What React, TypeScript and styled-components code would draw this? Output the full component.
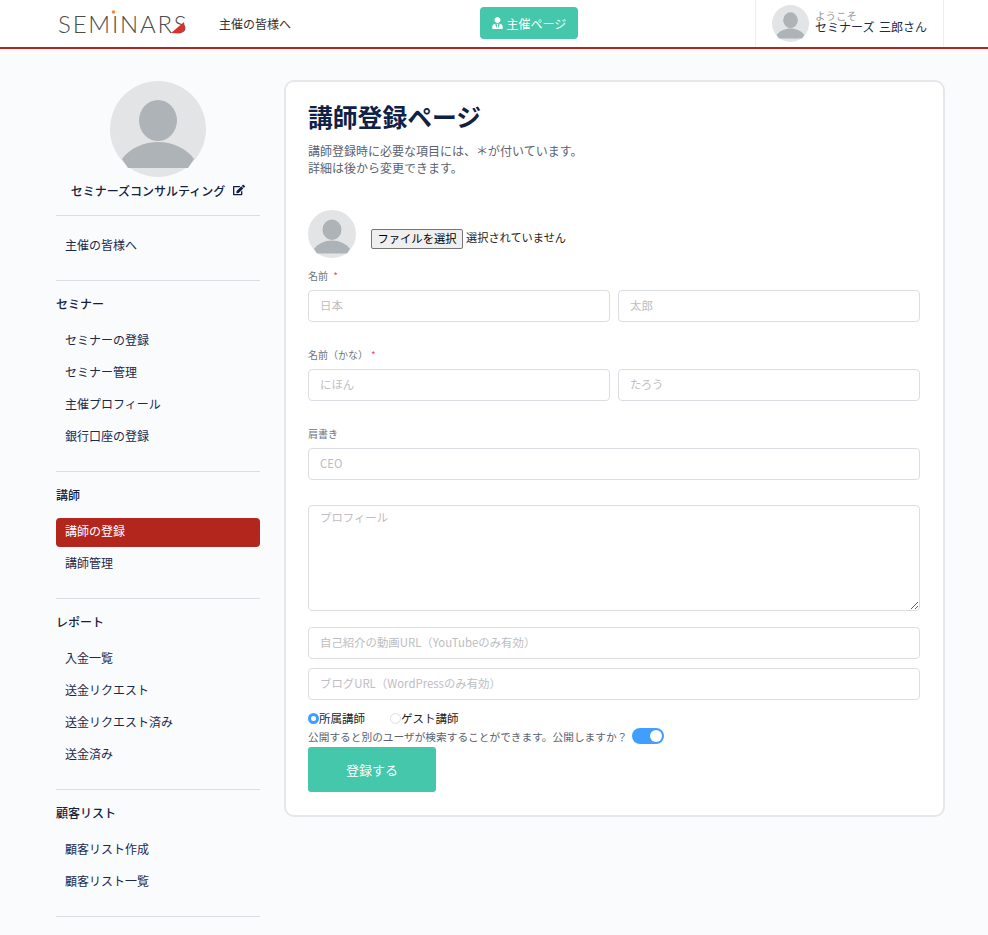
import React from 'react';
import styled, { createGlobalStyle } from 'styled-components';
import { FaEdit, FaUserTie } from 'react-icons/fa';

const GlobalStyle = createGlobalStyle`
  html, body {
    margin: 0;
    height: 100%;
    overflow: hidden;
    background: #fafbfd;
  }
  * {
    box-sizing: border-box;
  }
  body, input, textarea, button {
    font-family: "Noto Sans CJK JP", "Noto Sans", sans-serif;
  }
`;

/* ---------------------------------- Header --------------------------------- */
const Header = styled.header`
  display: flex;
  align-items: stretch;
  height: 49px;
  padding-left: 58px;
  background: #fff;
  border-bottom: 2px solid #b3261e;
`;

const Logo = styled.div`
  position: relative;
  width: 127px;
  margin-top: 8px;
  font-family: Lato, "Noto Sans", sans-serif;
  font-size: 24px;
  font-weight: 300;
  line-height: 32px;
  letter-spacing: 1.8px;
  color: #4e4e4e;
  white-space: nowrap;
`;

const LogoMark = styled.svg`
  position: absolute;
  left: 0;
  top: 0;
`;

const HeaderLink = styled.a`
  margin-left: 34px;
  width: 100px;
  font-size: 12px;
  line-height: 47px;
  color: #333;
`;

const PageButton = styled.a`
  display: flex;
  align-items: center;
  justify-content: center;
  gap: 4px;
  width: 98px;
  height: 32px;
  margin: 7px 0 0 161px;
  border-radius: 4px;
  background: #44c7aa;
  font-size: 12px;
  color: #fff;
  svg {
    width: 11px;
    height: 12px;
  }
`;

const Welcome = styled.div`
  display: flex;
  align-items: flex-start;
  gap: 6px;
  width: 189px;
  height: 47px;
  margin-left: 177px;
  padding: 5px 0 0 16px;
  border: solid #eeeef0;
  border-width: 0 1px;
`;

const WelcomeText = styled.div`
  padding-top: 5px;
  font-size: 12px;
  line-height: 11px;
  word-spacing: 2px;
  color: #1b2a4a;
  white-space: nowrap;
  small {
    display: block;
    font-size: 10.5px;
    color: #9a9a9a;
  }
`;

/* --------------------------------- Sidebar --------------------------------- */
const Main = styled.main`
  display: flex;
  align-items: flex-start;
  gap: 24px;
  padding: 31px 0 0 56px;
`;

const Sidebar = styled.aside`
  flex: 0 0 204px;
  margin-top: 1px;
`;

const ProfileBlock = styled.div`
  display: flex;
  flex-direction: column;
  align-items: center;
  height: 135px;
  border-bottom: 1px solid #dcdde1;
`;

const ProfileName = styled.div`
  display: flex;
  align-items: center;
  gap: 8px;
  margin-top: 5px;
  height: 16px;
  font-size: 12px;
  font-weight: 500;
  color: #14213d;
  white-space: nowrap;
  svg {
    width: 12px;
    height: 12px;
  }
`;

const SideSection = styled.section`
  padding: 13px 0 19px;
  border-bottom: 1px solid #dcdde1;
`;

const SideHeading = styled.h3`
  margin: 0 0 13px;
  font-size: 12px;
  font-weight: 500;
  line-height: 20px;
  color: #14213d;
`;

const SideItem = styled.a<{ $active?: boolean }>`
  display: block;
  height: 29px;
  margin-top: 3px;
  padding-left: 9px;
  border-radius: 4px;
  background: ${(p) => (p.$active ? '#b3261e' : 'transparent')};
  font-size: 12px;
  line-height: 26px;
  color: ${(p) => (p.$active ? '#fff' : '#1b2a4a')};
`;

/* ----------------------------------- Form ---------------------------------- */
const Card = styled.div`
  width: 661px;
  height: 737px;
  padding: 19px 23px 0 22px;
  background: #fff;
  border: 2px solid #e6e7eb;
  border-radius: 10px;
`;

const Title = styled.h1`
  margin: 0;
  font-size: 24.8px;
  font-weight: 700;
  line-height: 30px;
  color: #0f2147;
`;

const Intro = styled.p`
  margin: 11px 0 0;
  font-size: 12px;
  line-height: 17px;
  color: #5b6270;
`;

const UploadRow = styled.div`
  display: flex;
  align-items: flex-end;
  margin-top: 34px;
  height: 48px;
`;

const FileButton = styled.button`
  width: 92px;
  height: 20px;
  margin: 0 3px 9px 15px;
  padding: 0 0 2px;
  background: #efefef;
  border: 1px solid #767676;
  border-radius: 2px;
  font-size: 11.3px;
  line-height: 16px;
  color: #000;
`;

const FileName = styled.span`
  margin-bottom: 12px;
  font-size: 11.2px;
  line-height: 18px;
  color: #222;
`;

const FieldLabel = styled.label<{ $top: number }>`
  display: block;
  margin-top: ${(p) => p.$top}px;
  height: 15px;
  font-size: 10px;
  line-height: 15px;
  color: #6c757d;
  b {
    font-weight: 400;
    color: #e4566a;
    margin-left: 3px;
  }
`;

const FieldRow = styled.div`
  display: grid;
  grid-template-columns: 302px 302px;
  gap: 8px;
  margin-top: 7px;
`;

const TextInput = styled.input<{ $top?: number }>`
  display: block;
  width: 100%;
  height: 32px;
  margin-top: ${(p) => p.$top ?? 0}px;
  padding: 0 11px 3px;
  background: #fff;
  border: 1px solid #dcdce6;
  border-radius: 4px;
  font-size: 11.4px;
  outline: none;
  &::placeholder {
    color: #bdbdc2;
    opacity: 1;
  }
`;

const TextArea = styled.textarea`
  display: block;
  width: 100%;
  height: 106px;
  margin-top: 25px;
  padding: 3px 11px;
  background: #fff;
  border: 1px solid #dcdce6;
  border-radius: 4px;
  font-size: 11.4px;
  outline: none;
  &::placeholder {
    color: #bdbdc2;
    opacity: 1;
  }
`;

const RadioRow = styled.div`
  display: flex;
  gap: 25px;
  margin-top: 10px;
  height: 16px;
`;

const RadioOption = styled.span`
  display: flex;
  align-items: center;
  font-size: 11.5px;
  line-height: 16px;
  color: #222;
`;

const RadioDot = styled.i<{ $on?: boolean }>`
  display: block;
  width: 11px;
  height: 11px;
  border-radius: 50%;
  background: #fff;
  border: ${(p) => (p.$on ? '3.5px solid #409eff' : '1px solid #dcdfe6')};
`;

const PublishRow = styled.div`
  display: flex;
  align-items: center;
  gap: 5px;
  height: 16px;
  margin-top: 2px;
  font-size: 10.7px;
  color: #5b6270;
  white-space: nowrap;
`;

const Toggle = styled.span`
  display: flex;
  justify-content: flex-end;
  align-items: center;
  width: 32px;
  height: 16px;
  padding-right: 2px;
  border-radius: 8px;
  background: #409eff;
  &::after {
    content: '';
    width: 12px;
    height: 12px;
    border-radius: 50%;
    background: #fff;
  }
`;

const SubmitButton = styled.button`
  display: block;
  width: 128px;
  height: 45px;
  margin-top: 3px;
  background: #44c7aa;
  border: none;
  border-radius: 3px;
  font-size: 13px;
  color: #fff;
`;

const Avatar: React.FC<{ size: number }> = ({ size }) => (
  <svg width={size} height={size} viewBox="0 0 96 96" style={{ flex: 'none' }}>
    <circle cx="48" cy="48" r="48" fill="#e2e4e6" />
    <ellipse cx="48" cy="39.5" rx="19" ry="20.5" fill="#aeb3b7" />
    <path d="M12 78C20 67 34 61 48 61C62 61 76 67 84 78L78 87H18Z" fill="#aeb3b7" />
  </svg>
);

const sections = [
  { heading: 'セミナー', items: ['セミナーの登録', 'セミナー管理', '主催プロフィール', '銀行口座の登録'] },
  { heading: '講師', items: ['講師の登録', '講師管理'] },
  { heading: 'レポート', items: ['入金一覧', '送金リクエスト', '送金リクエスト済み', '送金済み'] },
  { heading: '顧客リスト', items: ['顧客リスト作成', '顧客リスト一覧'] },
];

const App: React.FC = () => {
  return (
    <>
      <GlobalStyle />
      <Header>
        <Logo>
          SEMINARS
          <LogoMark width="127" height="32" viewBox="0 0 127 32">
            <circle cx="55.5" cy="4" r="1.8" fill="#ee8a3c" />
            <path d="M113 25L126 14L127 22L122 25.500Z" fill="#d9322b" />
          </LogoMark>
        </Logo>
        <HeaderLink>主催の皆様へ</HeaderLink>
        <PageButton>
          <FaUserTie />
          主催ページ
        </PageButton>
        <Welcome>
          <Avatar size={37} />
          <WelcomeText>
            <small>ようこそ</small>
            セミナーズ 三郎さん
          </WelcomeText>
        </Welcome>
      </Header>

      <Main>
        <Sidebar>
          <ProfileBlock>
            <Avatar size={96} />
            <ProfileName>
              セミナーズコンサルティング
              <FaEdit />
            </ProfileName>
          </ProfileBlock>
          <SideSection>
            <SideItem>主催の皆様へ</SideItem>
          </SideSection>
          {sections.map((s) => (
            <SideSection key={s.heading}>
              <SideHeading>{s.heading}</SideHeading>
              {s.items.map((item) => (
                <SideItem key={item} $active={item === '講師の登録'}>
                  {item}
                </SideItem>
              ))}
            </SideSection>
          ))}
        </Sidebar>

        <Card>
          <Title>講師登録ページ</Title>
          <Intro>
            講師登録時に必要な項目には、＊が付いています。
            <br />
            詳細は後から変更できます。
          </Intro>
          <UploadRow>
            <Avatar size={48} />
            <FileButton type="button">ファイルを選択</FileButton>
            <FileName>選択されていません</FileName>
          </UploadRow>
          <FieldLabel $top={10}>
            名前 <b>*</b>
          </FieldLabel>
          <FieldRow>
            <TextInput placeholder="日本" />
            <TextInput placeholder="太郎" />
          </FieldRow>
          <FieldLabel $top={25}>
            名前（かな）<b>*</b>
          </FieldLabel>
          <FieldRow>
            <TextInput placeholder="にほん" />
            <TextInput placeholder="たろう" />
          </FieldRow>
          <FieldLabel $top={25}>肩書き</FieldLabel>
          <TextInput $top={7} placeholder="CEO" />
          <TextArea placeholder="プロフィール" />
          <TextInput $top={16} placeholder="自己紹介の動画URL（YouTubeのみ有効）" />
          <TextInput $top={9} placeholder="ブログURL（WordPressのみ有効）" />
          <RadioRow>
            <RadioOption>
              <RadioDot $on />
              所属講師
            </RadioOption>
            <RadioOption>
              <RadioDot />
              ゲスト講師
            </RadioOption>
          </RadioRow>
          <PublishRow>
            公開すると別のユーザが検索することができます。公開しますか？
            <Toggle />
          </PublishRow>
          <SubmitButton type="button">登録する</SubmitButton>
        </Card>
      </Main>
    </>
  );
};

export default App;
